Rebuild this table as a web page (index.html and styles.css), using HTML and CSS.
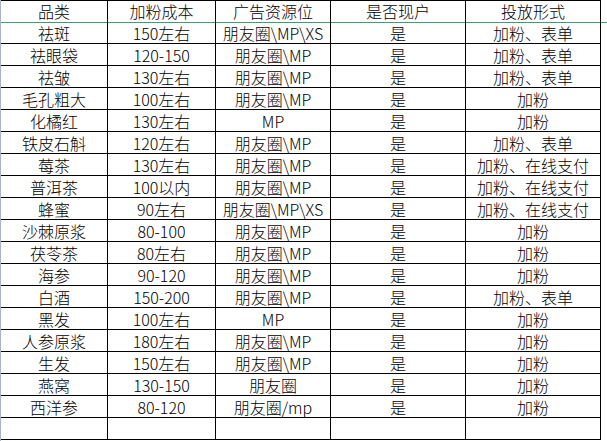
FILE: index.html
```html
<!DOCTYPE html>
<html lang="zh-CN">
<head>
<meta charset="utf-8">
<title>投放表</title>
<link rel="stylesheet" href="styles.css">
</head>
<body>
<div class="sheet">
  <div class="cell head">品类</div>
  <div class="cell head">加粉成本</div>
  <div class="cell head">广告资源位</div>
  <div class="cell head">是否现户</div>
  <div class="cell head">投放形式</div>
  <div class="fill head"></div>

  <div class="cell">祛斑</div><div class="cell">150左右</div><div class="cell">朋友圈\MP\XS</div><div class="cell">是</div><div class="cell">加粉、表单</div><div class="fill"></div>
  <div class="cell">祛眼袋</div><div class="cell">120-150</div><div class="cell">朋友圈\MP</div><div class="cell">是</div><div class="cell">加粉、表单</div><div class="fill"></div>
  <div class="cell">祛皱</div><div class="cell">130左右</div><div class="cell">朋友圈\MP</div><div class="cell">是</div><div class="cell">加粉、表单</div><div class="fill"></div>
  <div class="cell">毛孔粗大</div><div class="cell">100左右</div><div class="cell">朋友圈\MP</div><div class="cell">是</div><div class="cell">加粉</div><div class="fill"></div>
  <div class="cell">化橘红</div><div class="cell">130左右</div><div class="cell">MP</div><div class="cell">是</div><div class="cell">加粉</div><div class="fill"></div>
  <div class="cell">铁皮石斛</div><div class="cell">120左右</div><div class="cell">朋友圈\MP</div><div class="cell">是</div><div class="cell">加粉、表单</div><div class="fill"></div>
  <div class="cell">莓茶</div><div class="cell">130左右</div><div class="cell">朋友圈\MP</div><div class="cell">是</div><div class="cell">加粉、在线支付</div><div class="fill"></div>
  <div class="cell">普洱茶</div><div class="cell">100以内</div><div class="cell">朋友圈\MP</div><div class="cell">是</div><div class="cell">加粉、在线支付</div><div class="fill"></div>
  <div class="cell">蜂蜜</div><div class="cell">90左右</div><div class="cell">朋友圈\MP\XS</div><div class="cell">是</div><div class="cell">加粉、在线支付</div><div class="fill"></div>
  <div class="cell">沙棘原浆</div><div class="cell">80-100</div><div class="cell">朋友圈\MP</div><div class="cell">是</div><div class="cell">加粉</div><div class="fill"></div>
  <div class="cell">茯苓茶</div><div class="cell">80左右</div><div class="cell">朋友圈\MP</div><div class="cell">是</div><div class="cell">加粉</div><div class="fill"></div>
  <div class="cell">海参</div><div class="cell">90-120</div><div class="cell">朋友圈\MP</div><div class="cell">是</div><div class="cell">加粉</div><div class="fill"></div>
  <div class="cell">白酒</div><div class="cell">150-200</div><div class="cell">朋友圈\MP</div><div class="cell">是</div><div class="cell">加粉、表单</div><div class="fill"></div>
  <div class="cell">黑发</div><div class="cell">100左右</div><div class="cell">MP</div><div class="cell">是</div><div class="cell">加粉</div><div class="fill"></div>
  <div class="cell">人参原浆</div><div class="cell">180左右</div><div class="cell">朋友圈\MP</div><div class="cell">是</div><div class="cell">加粉</div><div class="fill"></div>
  <div class="cell">生发</div><div class="cell">150左右</div><div class="cell">朋友圈\MP</div><div class="cell">是</div><div class="cell">加粉</div><div class="fill"></div>
  <div class="cell">燕窝</div><div class="cell">130-150</div><div class="cell">朋友圈</div><div class="cell">是</div><div class="cell">加粉</div><div class="fill"></div>
  <div class="cell">西洋参</div><div class="cell">80-120</div><div class="cell">朋友圈/mp</div><div class="cell">是</div><div class="cell">加粉</div><div class="fill"></div>
  <div class="cell"></div><div class="cell"></div><div class="cell"></div><div class="cell"></div><div class="cell"></div><div class="fill"></div>
</div>
</body>
</html>
```

FILE: styles.css
```css
html, body {
  margin: 0;
  padding: 0;
  background: #ffffff;
}

body {
  width: 607px;
  height: 441px;
  overflow: hidden;
}

.sheet {
  display: grid;
  grid-template-columns: 107px 108px 115px 135px 135px 6px;
  grid-auto-rows: 22px;
  border-left: 1px solid #a9b3cf;
  min-height: 441px;
  box-sizing: border-box;
  align-content: start;
  font-family: "Noto Sans CJK SC", "Noto Sans", sans-serif;
  font-size: 16px;
  font-weight: 300;
  color: #000000;
}

.cell {
  box-sizing: border-box;
  border-right: 1px solid #000000;
  border-bottom: 1px solid #000000;
  text-align: center;
  line-height: 21px;
  white-space: nowrap;
  overflow: hidden;
  padding-top: 1px;
}

.fill {
  box-sizing: border-box;
}

.sheet .head {
  height: 23px;
  border-top: 1px solid #000000;
  border-bottom: 1px solid #3c9f73;
  line-height: 20px;
  padding-top: 0;
}

.sheet .fill.head {
  border-top: none;
}
```
